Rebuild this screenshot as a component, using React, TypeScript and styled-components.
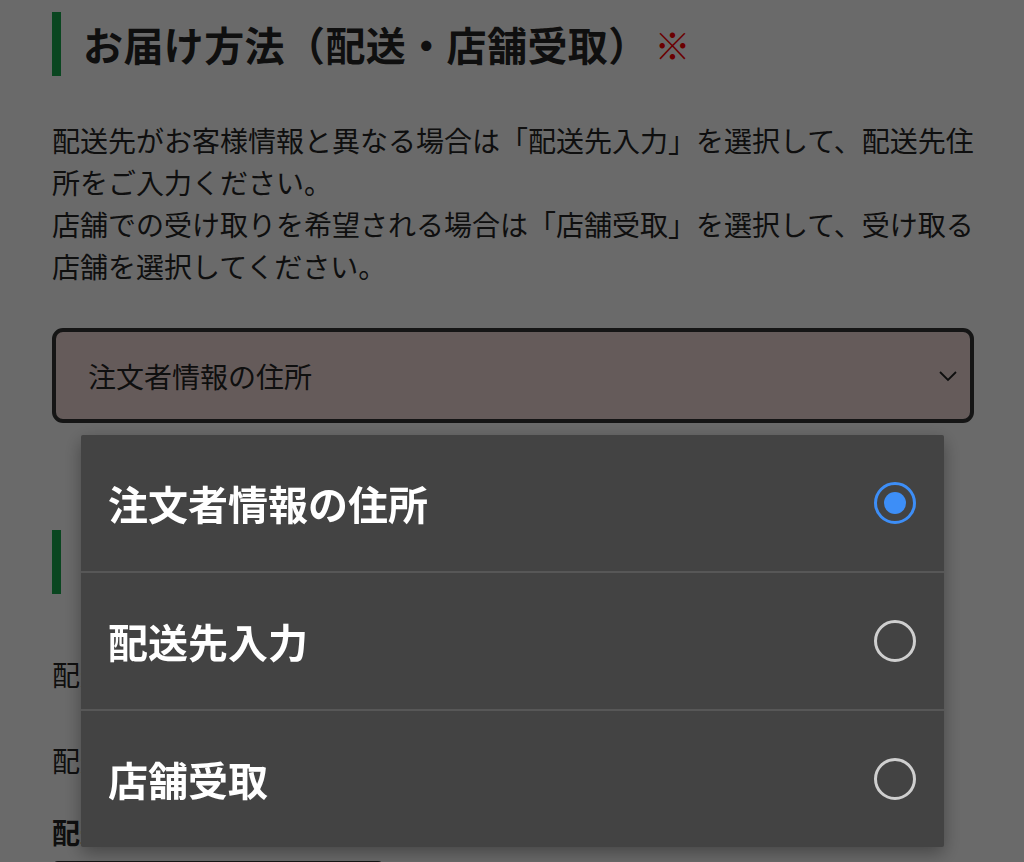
import React, { useState } from 'react'
import styled, { createGlobalStyle } from 'styled-components'

const GlobalStyle = createGlobalStyle`
    html, body {
        margin: 0;
        padding: 0;
        background: #ffffff;
        font-family: "Noto Sans CJK JP", "Noto Sans", sans-serif;
        color: #262626;
        overflow: hidden;
    }
`

const Page = styled.div`
    padding: 12px 50px 0 52px;
    height: 862px;
    box-sizing: border-box;
    overflow: hidden;
`
const Heading = styled.h2`
    margin: 0;
    display: flex;
    align-items: center;
    height: 64px;
    border-left: 9px solid #1aa84d;
    padding-left: 22px;
    font-size: 40px;
    font-weight: 700;
    letter-spacing: 0.4px;
`
const Required = styled.span`
    color: #ff0000;
    font-weight: 400;
    font-size: 36px;
    margin-left: 6px;
`
const Lead = styled.p`
    margin: 43px 0 0;
    font-size: 28px;
    line-height: 42px;
`
const SelectBox = styled.div`
    margin-top: 41px;
    height: 95px;
    box-sizing: border-box;
    border: 4px solid #333333;
    border-radius: 11px;
    background: #f3dbd9;
    display: flex;
    align-items: center;
    justify-content: space-between;
    padding: 0 10px 0 32px;
    font-size: 28px;
`
const Section = styled.div`
    margin-top: 107px;
`
const Text = styled.p`
    margin: ${(p: { $top: number }) => p.$top}px 0 0;
    font-size: 28px;
    line-height: 42px;
`
const Label = styled.div`
    margin-top: 30px;
    font-size: 28px;
    font-weight: 700;
    line-height: 42px;
`
const Input = styled.div`
    margin-top: 8px;
    width: 326px;
    height: 60px;
    border: 3px solid #333333;
    border-radius: 6px;
`
const Overlay = styled.div`
    position: fixed;
    inset: 0;
    background: rgba(0, 0, 0, 0.585);
`
const Menu = styled.ul`
    position: fixed;
    left: 81px;
    top: 435px;
    width: 863px;
    margin: 0;
    padding: 0;
    list-style: none;
    background: #434343;
    border-radius: 2px;
    box-shadow: 0 6px 18px rgba(0, 0, 0, 0.35);
`
const Option = styled.li`
    display: flex;
    align-items: center;
    justify-content: space-between;
    height: 136px;
    padding: 0 28px 0 27px;
    border-top: ${(p: { $first: boolean }) => (p.$first ? 'none' : '2px solid #575757')};
    color: #ffffff;
    font-size: 40px;
    font-weight: 700;
`
const Radio = styled.span<{ $on: boolean }>`
    width: 42px;
    height: 42px;
    box-sizing: border-box;
    border-radius: 50%;
    border: 3px solid ${(p) => (p.$on ? '#3d8ef7' : '#cfcfcf')};
    display: flex;
    align-items: center;
    justify-content: center;
    &::after {
        content: '';
        display: ${(p) => (p.$on ? 'block' : 'none')};
        width: 22px;
        height: 22px;
        border-radius: 50%;
        background: #3d8ef7;
    }
`

const options = ['注文者情報の住所', '配送先入力', '店舗受取']

export default function App() {
    const [selected, setSelected] = useState(0)
    return (
        <>
            <GlobalStyle />
            <Page>
                <Heading>
                    お届け方法（配送・店舗受取）<Required>※</Required>
                </Heading>
                <Lead>
                    配送先がお客様情報と異なる場合は「配送先入力」を選択して、配送先住所をご入力ください。
                    <br />
                    店舗での受け取りを希望される場合は「店舗受取」を選択して、受け取る店舗を選択してください。
                </Lead>
                <SelectBox>
                    {options[selected]}
                    <svg width="24" height="14" viewBox="0 0 24 14">
                        <path d="M4 3 L12 11 L20 3" fill="none" stroke="#222" strokeWidth="1.8" />
                    </svg>
                </SelectBox>
                <Section>
                    <Heading>配送先情報</Heading>
                    <Text $top={59}>配送先のお名前をご入力ください。</Text>
                    <Text $top={44}>配送先の電話番号をご入力ください。</Text>
                    <Label>配送先住所</Label>
                    <Input />
                </Section>
            </Page>
            <Overlay />
            <Menu>
                {options.map((o, i) => (
                    <Option key={o} $first={i === 0} onClick={() => setSelected(i)}>
                        {o}
                        <Radio $on={i === selected} />
                    </Option>
                ))}
            </Menu>
        </>
    )
}
